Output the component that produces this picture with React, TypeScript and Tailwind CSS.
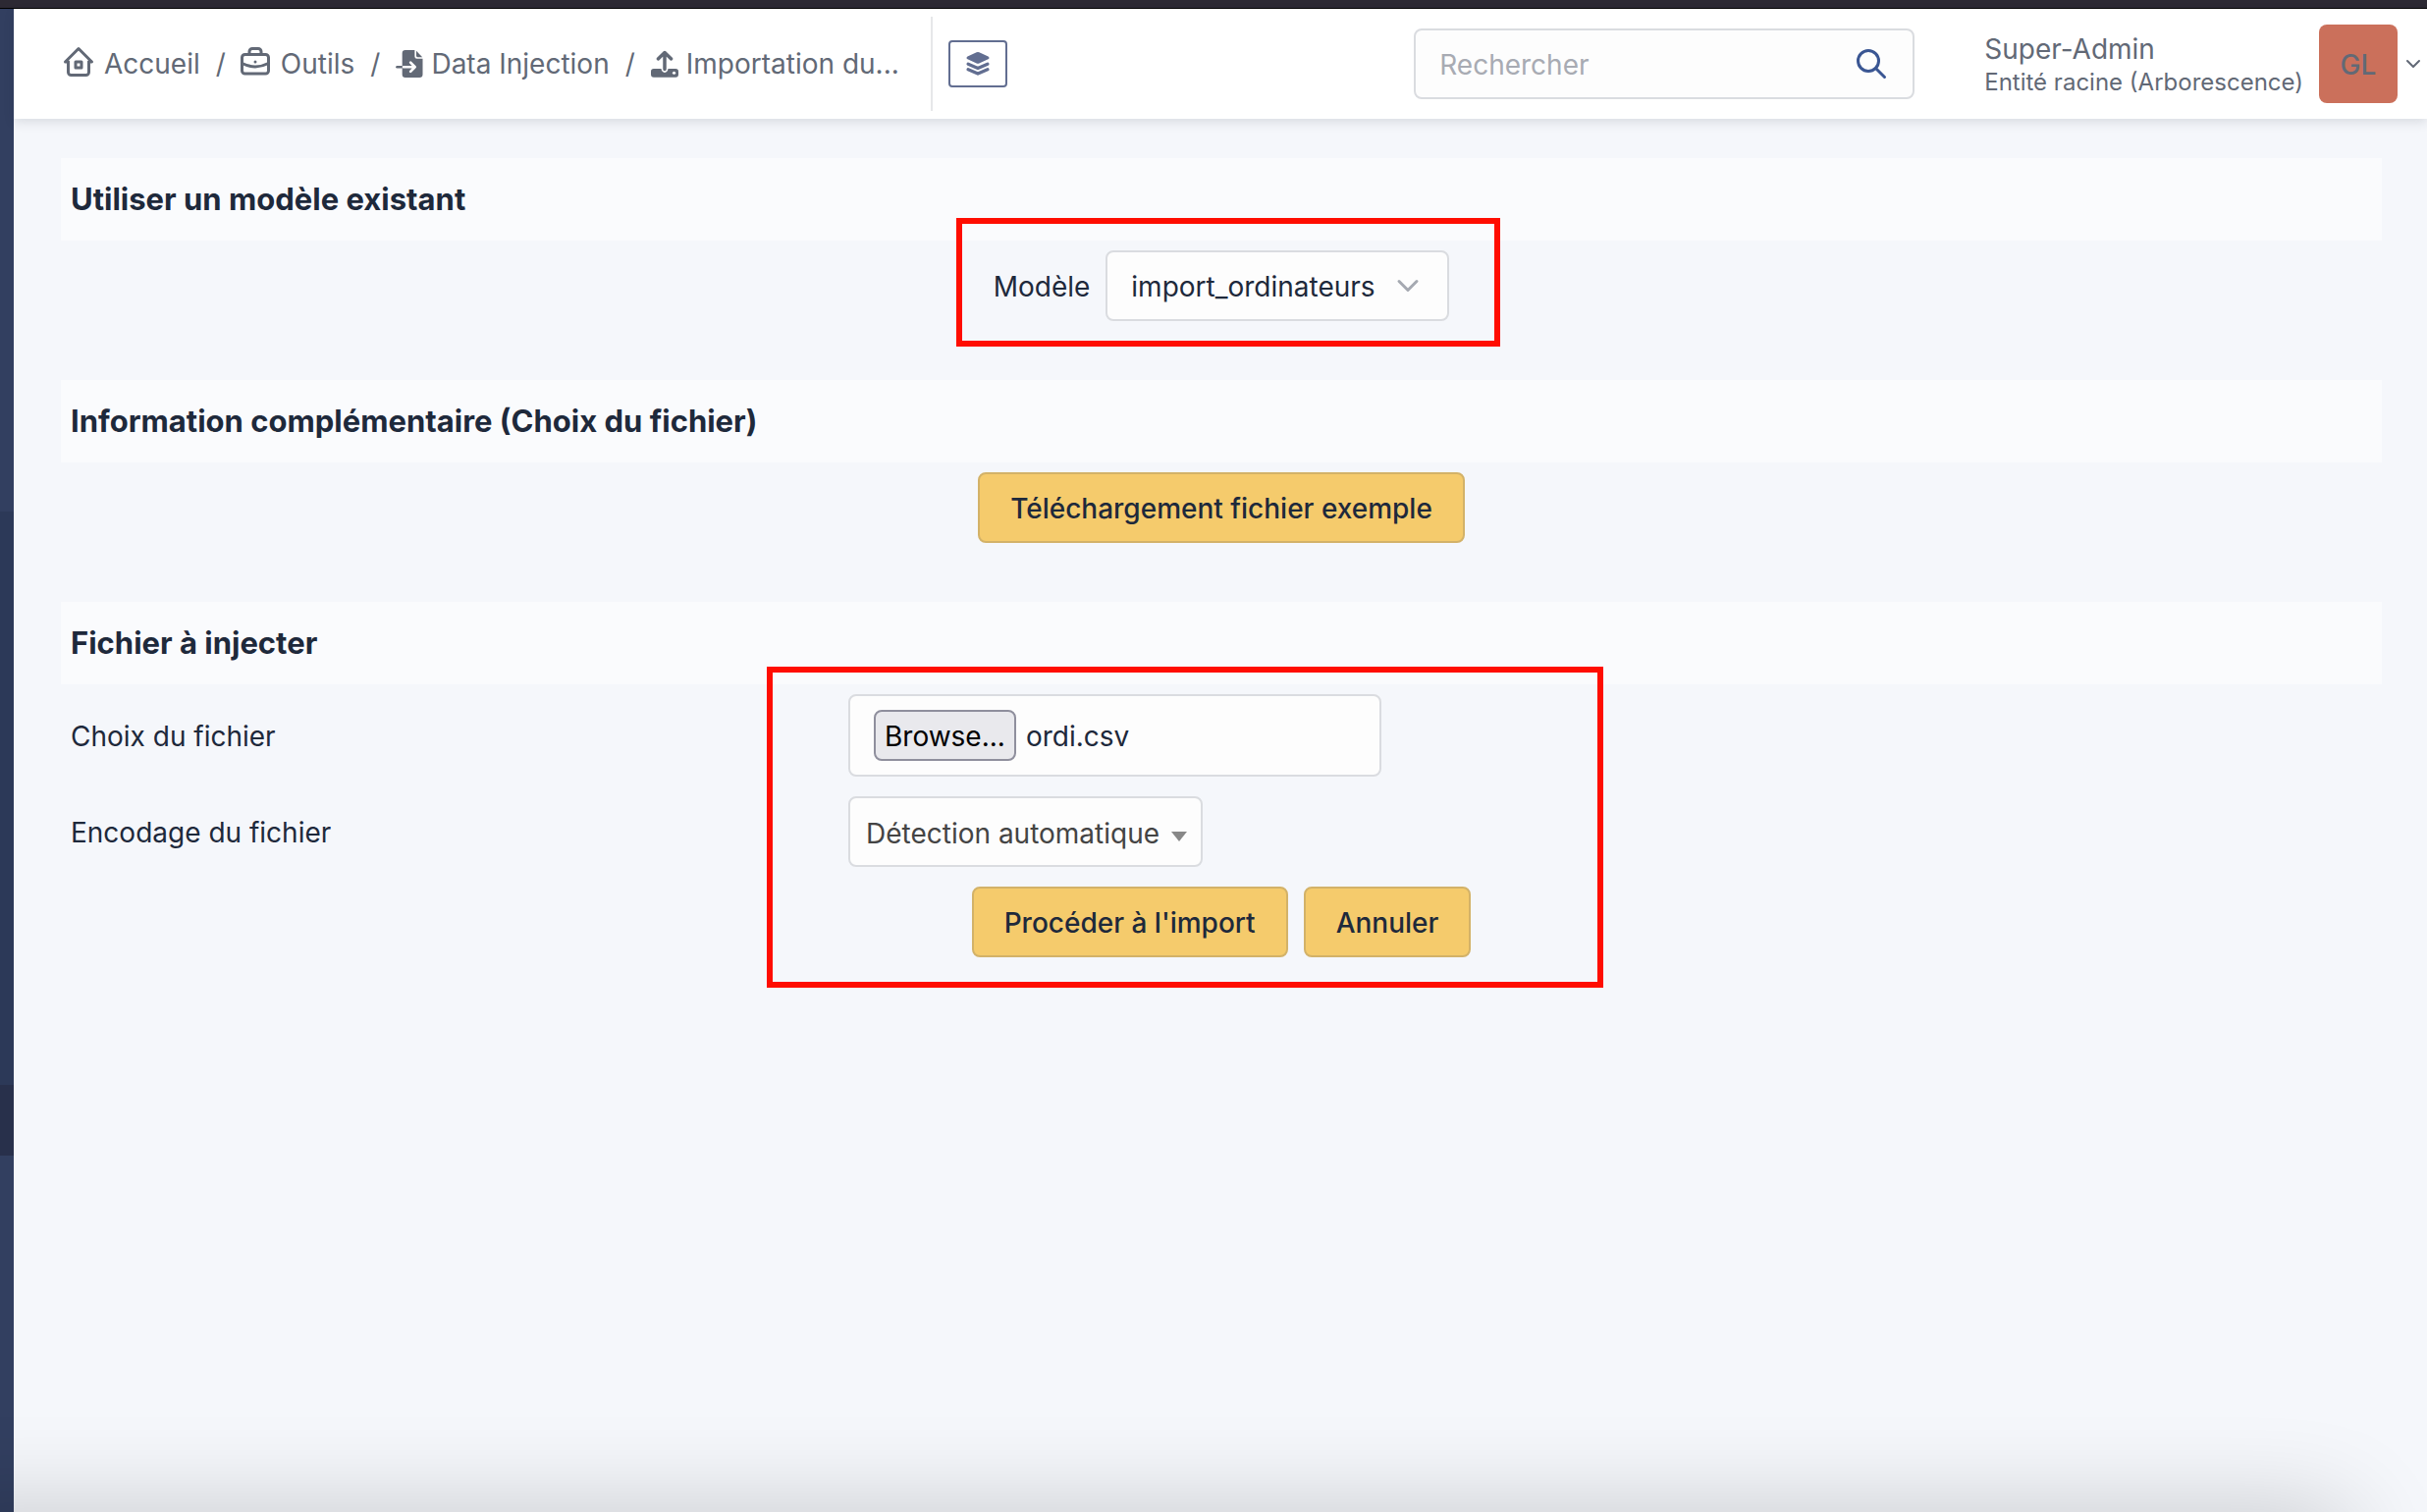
import React, { useRef, useState } from "react";
import { TbBriefcase, TbChevronDown, TbHome2, TbSearch } from "react-icons/tb";

const FileImportIcon = () => (
  <svg viewBox="0 0 85 86" className="h-7 w-7 shrink-0" aria-hidden="true">
    <path
      d="M30 0H59V20Q59 27 66 27H84V76Q84 86 74 86H30Q20 86 20 76V10Q20 0 30 0Z"
      fill="currentColor"
    />
    <path d="M64 2L83 22H68Q64 22 64 18Z" fill="currentColor" />
    <path d="M4 53H18" stroke="currentColor" strokeWidth="8" strokeLinecap="round" />
    <path
      d="M24 53H60M46 39L60 53L46 67"
      fill="none"
      stroke="#fff"
      strokeWidth="8"
      strokeLinecap="round"
      strokeLinejoin="round"
    />
  </svg>
);

const UploadIcon = () => (
  <svg viewBox="0 0 88 86" className="h-7 w-7 shrink-0" aria-hidden="true">
    <path
      d="M9 59H33Q35 71 44 71Q53 71 55 59H79Q88 59 88 68V77Q88 86 79 86H9Q0 86 0 77V68Q0 59 9 59Z"
      fill="currentColor"
    />
    <circle cx="74" cy="72" r="5" fill="#fff" />
    <path
      d="M44 7V60M23 27L44 7L65 27"
      fill="none"
      stroke="currentColor"
      strokeWidth="11"
      strokeLinecap="round"
      strokeLinejoin="round"
    />
  </svg>
);

const LayersIcon = () => (
  <svg viewBox="0 0 70 73" className="h-6 w-6" fill="currentColor" aria-hidden="true">
    <path d="M31 1Q35 -1 39 1L67 14Q73 18 67 22L39 35Q35 37 31 35L3 22Q-3 18 3 14Z" />
    <path
      d="M5 37L35 50L65 37M5 54L35 67L65 54"
      fill="none"
      stroke="currentColor"
      strokeWidth="10"
      strokeLinecap="round"
      strokeLinejoin="round"
    />
  </svg>
);

const crumbs = [
  { label: "Accueil", icon: <TbHome2 className="mb-1 size-9" />, gap: "gap-2 -ml-1" },
  { label: "Outils", icon: <TbBriefcase className="mb-1 size-9" />, gap: "gap-2 -ml-1" },
  { label: "Data Injection", icon: <FileImportIcon />, gap: "gap-2" },
  { label: "Importation du...", icon: <UploadIcon />, gap: "gap-2" },
];

const Sidebar = () => (
  <nav aria-label="Menu" className="flex w-[14px] shrink-0 flex-col bg-[#323f60]">
    <div className="h-[512px]" />
    <div className="h-[584px] bg-[#2c3958]" />
    <div className="h-[72px] bg-[#28304b]" />
  </nav>
);

const Header = () => (
  <header className="relative flex h-28 items-center bg-white text-[#626976] shadow-[0_4px_10px_rgba(30,41,59,0.12)]">
    <nav aria-label="Fil d'Ariane" className="pl-[52px]">
      <ol className="flex items-center">
        {crumbs.map((crumb, i) => (
          <li key={crumb.label} className="flex items-center">
            {i > 0 && <span className="px-4">/</span>}
            <a href="#" className={`flex items-center whitespace-nowrap ${crumb.gap}`}>
              {crumb.icon}
              {crumb.label}
            </a>
          </li>
        ))}
      </ol>
    </nav>

    <div className="ml-8 h-24 w-0.5 bg-[#e6e7e9]" />
    <button
      type="button"
      aria-label="Changer de vue"
      className="ml-4 flex h-12 w-[60px] items-center justify-center rounded-sm border-2 border-[#626e91] text-[#626e91]"
    >
      <LayersIcon />
    </button>

    <form
      role="search"
      className="ml-auto flex h-[72px] w-[510px] items-center rounded-lg border-2 border-[#dadce0] bg-[#fdfdfd] pr-6 pl-6"
    >
      <input
        type="search"
        aria-label="Rechercher"
        placeholder="Rechercher"
        className="min-w-0 flex-1 bg-transparent pt-0.5 outline-none placeholder:text-[#a8abb3]"
      />
      <button type="button" aria-label="Lancer la recherche" className="text-[#3a5693]">
        <TbSearch className="size-9" />
      </button>
    </form>

    <button type="button" className="ml-[71px] flex items-center pr-0.5 text-left">
      <span className="mr-4 flex flex-col pt-0.5 whitespace-nowrap">
        <span className="leading-9">Super-Admin</span>
        <span className="text-[24px] leading-8">Entité racine (Arborescence)</span>
      </span>
      <span className="flex size-20 items-center justify-center rounded-lg bg-[#cb705b] pt-0.5 font-medium">
        GL
      </span>
      <TbChevronDown className="ml-1 size-6" />
    </button>
  </header>
);

const SectionTitle = ({ children }: { children: React.ReactNode }) => (
  <h2 className="flex h-[84px] items-center bg-[#fafbfd] px-2.5 text-[31px] font-bold">
    {children}
  </h2>
);

const ActionButton = ({ children }: { children: React.ReactNode }) => (
  <button
    type="button"
    className="h-[72px] rounded-lg border-2 border-[#d3b268] bg-[#f5cb6c] px-[31px] pt-0.5 font-medium whitespace-nowrap"
  >
    {children}
  </button>
);

const FilePicker = () => {
  const inputRef = useRef<HTMLInputElement>(null);
  const [fileName, setFileName] = useState("ordi.csv");

  return (
    <div className="flex h-[84px] w-[543px] items-center gap-2.5 rounded-lg border-2 border-[#dadce0] bg-[#fdfdfd] px-6">
      <input
        ref={inputRef}
        id="file"
        type="file"
        accept=".csv"
        className="hidden"
        onChange={(e) => setFileName(e.target.files?.[0]?.name ?? "")}
      />
      <button
        type="button"
        onClick={() => inputRef.current?.click()}
        className="h-[52px] rounded-lg border-2 border-[#8f8f9d] bg-[#e9e9ed] px-[9px] pt-0.5 text-black"
      >
        Browse...
      </button>
      <span className="pt-0.5">{fileName}</span>
    </div>
  );
};

const App = () => {
  return (
    <div className="flex min-h-screen flex-col bg-[#f5f7fb] font-['Inter',sans-serif] text-[28px] leading-10 text-[#1e293b]">
      <div className="h-[9px] border-b border-black bg-[#2c2933]" />

      <div className="flex flex-1">
        <Sidebar />

        <div className="min-w-0 flex-1">
          <Header />

          <main className="pt-10 pr-[46px] pl-12">
            {/* Model selection */}
            <section className="pb-[50px]">
              <SectionTitle>Utiliser un modèle existant</SectionTitle>
              <div className="flex justify-center py-2.5">
                <div className="relative flex items-center gap-4">
                  <label htmlFor="model" className="pt-0.5">
                    Modèle
                  </label>
                  <div className="relative">
                    <select
                      id="model"
                      className="h-[72px] w-[350px] appearance-none rounded-lg border-2 border-[#dadce0] bg-[#fdfdfd] pt-0.5 pl-6"
                    >
                      <option>import_ordinateurs</option>
                    </select>
                    <TbChevronDown className="pointer-events-none absolute top-[18px] right-6 size-9 text-[#a5a9b1]" />
                  </div>
                  {/* Highlight frame */}
                  <div className="pointer-events-none absolute -top-[33px] -right-[52px] -bottom-[26px] -left-[38px] border-6 border-[#ff0d00]" />
                </div>
              </div>
            </section>

            {/* Sample file */}
            <section className="pb-[50px]">
              <SectionTitle>Information complémentaire (Choix du fichier)</SectionTitle>
              <div className="flex justify-center py-2.5">
                <ActionButton>Téléchargement fichier exemple</ActionButton>
              </div>
            </section>

            {/* File to inject */}
            <section className="relative">
              <SectionTitle>Fichier à injecter</SectionTitle>
              <div className="grid grid-cols-[1fr_2fr] items-center">
                <label htmlFor="file" className="px-2.5 pt-0.5">
                  Choix du fichier
                </label>
                <div className="py-2.5 pl-[14px]">
                  <FilePicker />
                </div>
                <label htmlFor="encoding" className="px-2.5 pt-0.5">
                  Encodage du fichier
                </label>
                <div className="py-2.5 pl-[14px]">
                  <div className="relative w-[361px]">
                    <select
                      id="encoding"
                      className="h-[72px] w-full appearance-none rounded-lg border-2 border-[#dadce0] bg-[#fdfdfd] pt-1 pl-4 text-[#444]"
                    >
                      <option>Détection automatique</option>
                    </select>
                    <svg
                      viewBox="0 0 16 10"
                      className="pointer-events-none absolute top-9 right-4 h-2.5 w-4 fill-[#888]"
                      aria-hidden="true"
                    >
                      <path d="M0 0H16L8 10Z" />
                    </svg>
                  </div>
                </div>
              </div>
              <div className="flex justify-center gap-4 py-2.5">
                <ActionButton>Procéder à l'import</ActionButton>
                <ActionButton>Annuler</ActionButton>
              </div>
              {/* Highlight frame */}
              <div className="pointer-events-none absolute top-[66px] right-[793px] -bottom-[21px] left-[719px] border-6 border-[#ff0d00]" />
            </section>
          </main>
        </div>
      </div>

      {/* Shade rising from the bottom edge of the window */}
      <div className="pointer-events-none fixed top-full right-20 -left-24 h-24 shadow-[0_0_100px_rgba(0,0,0,0.2)]" />
    </div>
  );
};

export default App;
